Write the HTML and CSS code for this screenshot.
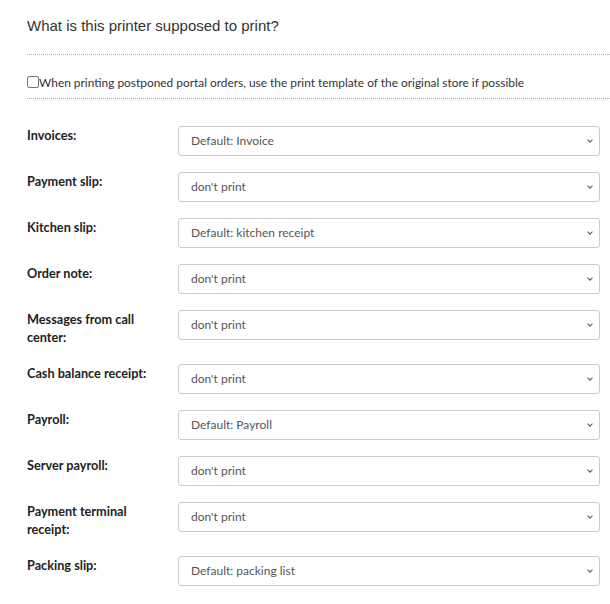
FILE: index.html
```html
<!DOCTYPE html>
<html>
<head>
<meta charset="UTF-8">
<title>Printer settings</title>
<link rel="stylesheet" href="styles.css">
</head>
<body>

<div id="wrapper">
	<h2 class="title">What is this printer supposed to print?</h2>
	<hr class="dots">

	<label class="check">
		<span class="box"></span>When printing postponed portal orders, use the print template of the original store if possible
	</label>
	<hr class="dots">

	<div class="rows">
		<div class="row">
			<div class="label">Invoices:</div>
			<div class="select">Default: Invoice</div>
		</div>
		<div class="row">
			<div class="label">Payment slip:</div>
			<div class="select">don't print</div>
		</div>
		<div class="row">
			<div class="label">Kitchen slip:</div>
			<div class="select">Default: kitchen receipt</div>
		</div>
		<div class="row">
			<div class="label">Order note:</div>
			<div class="select">don't print</div>
		</div>
		<div class="row">
			<div class="label">Messages from call center:</div>
			<div class="select">don't print</div>
		</div>
		<div class="row">
			<div class="label">Cash balance receipt:</div>
			<div class="select">don't print</div>
		</div>
		<div class="row">
			<div class="label">Payroll:</div>
			<div class="select">Default: Payroll</div>
		</div>
		<div class="row">
			<div class="label">Server payroll:</div>
			<div class="select">don't print</div>
		</div>
		<div class="row">
			<div class="label">Payment terminal receipt:</div>
			<div class="select">don't print</div>
		</div>
		<div class="row">
			<div class="label">Packing slip:</div>
			<div class="select">Default: packing list</div>
		</div>
	</div>
</div>

</body>
</html>
```

FILE: styles.css
```css
body{
	margin: 0;
	background: #fff;
	font-family: Lato, "Liberation Sans", sans-serif;
	color: #333;
}
#wrapper{
	padding: 16px 0 0 27px;
}
.title{
	font-family: "Liberation Sans", Arial, sans-serif;
	font-weight: normal;
	font-size: 15px;
	line-height: 20px;
	color: #333;
	margin: 0 0 18px;
}
.dots{
	border: 0;
	border-top: 1px dotted #aaa;
	margin: 0;
}
.check{
	display: flex;
	align-items: center;
	font-size: 11.9px;
	color: #333;
	height: 14px;
	margin: 20px 0 9px;
}
.check .box{
	width: 10px;
	height: 10px;
	border: 1.5px solid #777;
	border-radius: 2px;
	flex: none;
}
.rows{
	padding: 27px 10px 0 0;
}
.row{
	display: flex;
	align-items: flex-start;
	margin-bottom: 16px;
}
.label{
	width: 125px;
	margin-right: 26px;
	font-size: 12.7px;
	font-weight: bold;
	line-height: 18px;
	color: #222;
	padding-bottom: 2px;
}
.select{
	flex: 1;
	height: 28px;
	line-height: 28px;
	border: 1px solid #ccc;
	border-radius: 3px;
	padding: 0 12px;
	font-size: 12px;
	color: #555;
	position: relative;
}
.select::after{
	content: "";
	position: absolute;
	right: 7px;
	top: 11px;
	width: 3px;
	height: 3px;
	border-right: 1.2px solid #555;
	border-bottom: 1.2px solid #555;
	transform: rotate(45deg);
}
```
